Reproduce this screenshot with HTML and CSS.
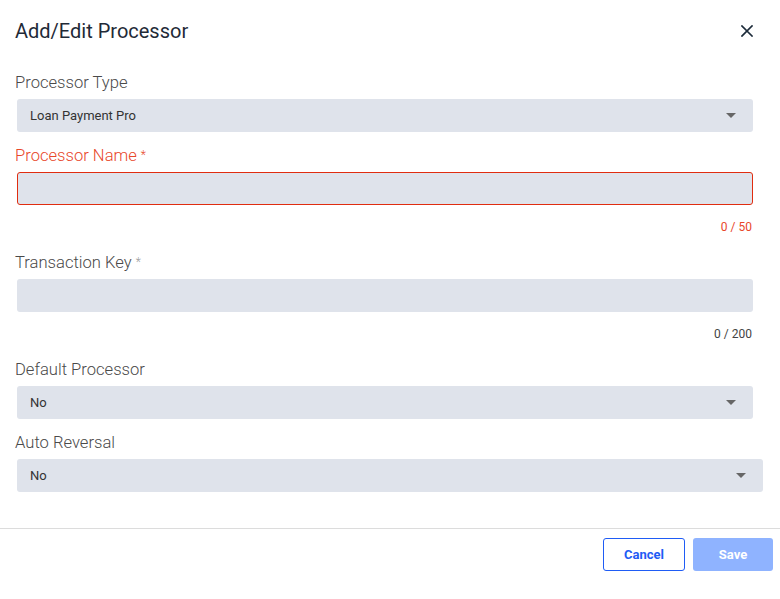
FILE: index.html
```html
<!DOCTYPE html>
<html lang="en">
<head>
<meta charset="utf-8">
<title>Add/Edit Processor</title>
<link rel="stylesheet" href="styles.css">
</head>
<body>
<div class="dialog">
  <div class="header">
    <h1 class="title">Add/Edit Processor</h1>
    <button class="close" aria-label="Close">
      <svg width="12" height="12" viewBox="0 0 12 12"><path d="M1 1L11 11M11 1L1 11" stroke="#1c2b3a" stroke-width="1.7" stroke-linecap="square"/></svg>
    </button>
  </div>
  <div class="body">
    <div class="field">
      <div class="label">Processor Type</div>
      <div class="box select"><span>Loan Payment Pro</span><span class="caret"></span></div>
    </div>
    <div class="field error with-help">
      <div class="label">Processor Name<span class="req">*</span></div>
      <div class="box input"></div>
      <div class="help">0 / 50</div>
    </div>
    <div class="field with-help">
      <div class="label">Transaction Key<span class="req">*</span></div>
      <div class="box input"></div>
      <div class="help">0 / 200</div>
    </div>
    <div class="field">
      <div class="label">Default Processor</div>
      <div class="box select"><span>No</span><span class="caret"></span></div>
    </div>
    <div class="field last">
      <div class="label">Auto Reversal</div>
      <div class="box select wide"><span>No</span><span class="caret"></span></div>
    </div>
  </div>
  <div class="footer">
    <button class="btn btn-outline">Cancel</button>
    <button class="btn btn-primary">Save</button>
  </div>
</div>
</body>
</html>
```
FILE: styles.css
```css
* { box-sizing: border-box; }
html, body { margin: 0; padding: 0; background: #fff; }
body { font-family: Roboto, "Noto Sans", sans-serif; color: #333; }
.dialog { width: 780px; height: 599px; }
.header {
  display: flex; align-items: center; justify-content: space-between;
  height: 62px; padding: 0 25px 0 15px;
}
.title { margin: 0; font-size: 20px; font-weight: 400; color: #1f2a37; }
.close { border: 0; background: none; padding: 0; width: 16px; height: 16px; display: flex; align-items: center; justify-content: center; }
.body { padding: 10px 26px 0 15px; }
.field { margin-bottom: 13px; }
.field.last { margin-bottom: 0; }
.field.with-help { margin-bottom: 17px; }
.label { font-size: 16.6px; line-height: 20px; padding-top: 1px; font-weight: 300; color: #4a4a4a; margin-bottom: 6px; }
.req { font-size: 12px; color: #9a9a9a; vertical-align: top; margin-left: 4px; position: relative; top: -1px; }
.box {
  height: 33px; margin: 0 1px 0 2px; background: #dfe3eb; border-radius: 3px;
  display: flex; align-items: center; justify-content: space-between;
  padding: 0 17px 0 13px; font-size: 13px; color: #333;
}
.box.wide { margin-right: -9px; }
.caret { width: 0; height: 0; border-left: 5px solid transparent; border-right: 5px solid transparent; border-top: 5px solid #666; }
.help { text-align: right; font-size: 12px; line-height: 16px; margin-top: 14px; padding-right: 2px; color: #444; }
.error .label { color: #e8472a; }
.error .req { color: #e8472a; }
.error .box { border: 1px solid #e02d10; }
.error .help { color: #e8472a; }
.footer {
  margin-top: 36px; border-top: 1px solid #dcdcdc;
  display: flex; justify-content: flex-end; gap: 8px; padding: 9px 7px 0 0;
}
.btn { height: 33px; font-family: Roboto, sans-serif; font-size: 13px; font-weight: 700; border-radius: 3px; cursor: pointer; }
.btn-outline { width: 82px; background: #fff; border: 1px solid #1f5cf5; color: #1f5cf5; }
.btn-primary { width: 80px; background: #8fb3ff; border: 0; color: #fff; }
```
